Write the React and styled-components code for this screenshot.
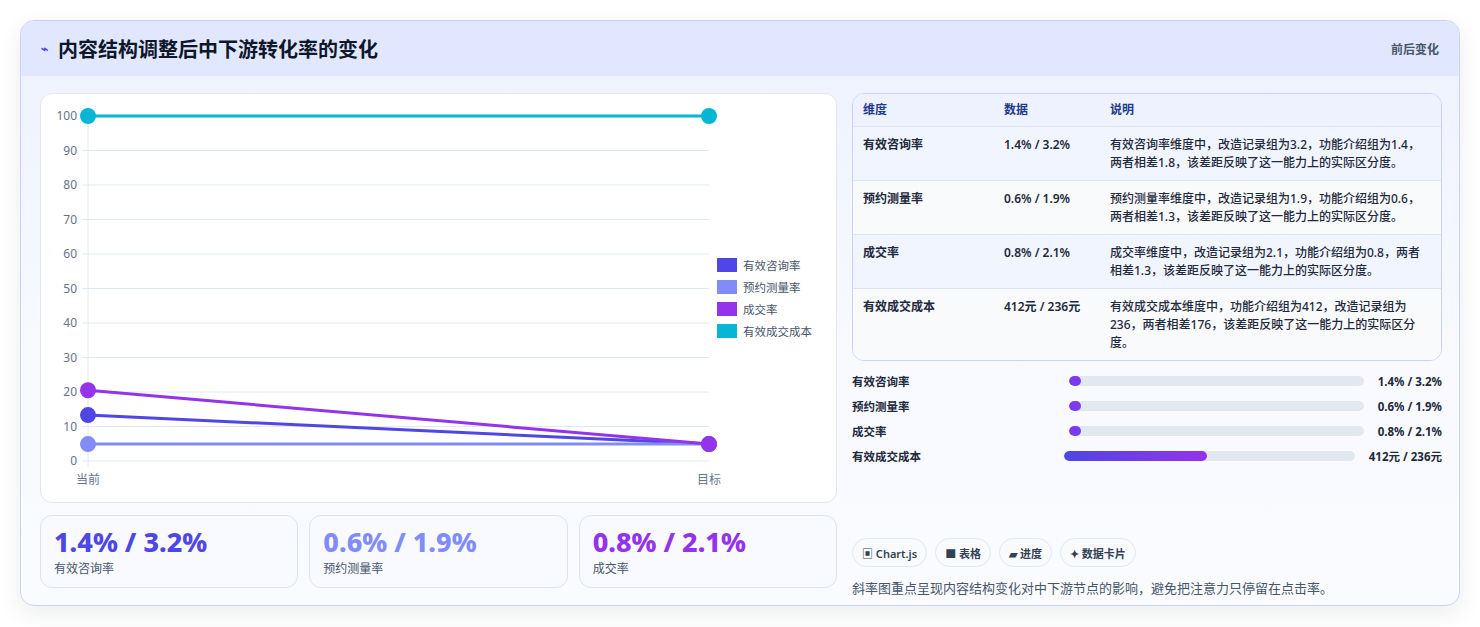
import React from "react";
import styled, { createGlobalStyle } from "styled-components";

const Global = createGlobalStyle`
  body { margin: 0; background: #fff; font-family: "Noto Sans", "Noto Sans CJK SC", sans-serif; }
`;
const Page = styled.div`padding: 20px 20px 20px 20px;`;
const Card = styled.div`
  border: 1px solid #c7d2fe; border-radius: 14px; overflow: hidden;
  background: linear-gradient(180deg, #eef2ff 0%, #f8faff 60%, #fafbff 100%);
  box-shadow: 0 8px 24px rgba(15,23,42,0.08);
  height: 586px; box-sizing: border-box;
`;
const Header = styled.div`
  height: 55px; background: #e0e7ff; display: flex; align-items: center;
  justify-content: space-between; padding: 0 20px 0 20px;
`;
const Title = styled.h1`
  margin: 0; font-size: 20px; font-weight: 700; color: #0f172a; display: flex; align-items: center; gap: 10px;
`;
const Badge = styled.span`font-size: 12px; font-weight: 700; color: #475569;`;
const Body = styled.div`
  display: grid; grid-template-columns: 797px 590px; gap: 15px; padding: 17px 19px 0 19px;
`;
const Col = styled.div`display: flex; flex-direction: column;`;
const ChartBox = styled.div`
  height: 410px; box-sizing: border-box; background: #fff; border: 1px solid #e2e8f0; border-radius: 12px; position: relative;
`;
const Stats = styled.div`display: grid; grid-template-columns: repeat(3, 1fr); gap: 11px; margin-top: 12px;`;
const Stat = styled.div`
  height: 73px; box-sizing: border-box; border: 1px solid #dbe3f3; border-radius: 12px; background: #f8faff;
  padding: 9px 13px;
`;
const StatVal = styled.div`font-size: 27px; font-weight: 800; color: ${p => p.c}; line-height: 34px;`;
const StatLbl = styled.div`font-size: 12px; color: #475569;`;
const Table = styled.div`
  border: 1px solid #c7d2fe; border-radius: 12px; overflow: hidden; background: #fff;
`;
const Row = styled.div`
  display: grid; grid-template-columns: 141px 106px 1fr; padding: ${p => p.head ? "0 10px" : "9px 10px 8px"};
  background: ${p => p.head ? "#eef2ff" : p.alt ? "#f8fafc" : "#f1f5ff"};
  border-top: ${p => p.first ? "none" : "1px solid #dbe3f0"};
  font-size: 12px; line-height: 18px; color: #1e293b; font-weight: 500;
  min-height: ${p => p.head ? "32px" : "auto"}; align-items: ${p => p.head ? "center" : "start"};
  & > span { font-weight: ${p => p.head ? 700 : 600}; color: ${p => p.head ? "#1e3a8a" : "#1e293b"}; }
  & > span:last-child { font-weight: ${p => p.head ? 700 : 500}; padding-right: 4px; }
`;
const Bars = styled.div`display: flex; flex-direction: column; gap: 7px; margin-top: 11px;`;
const BarRow = styled.div`
  display: grid; grid-template-columns: ${p => p.wide ? "212px 1fr 87px" : "217px 1fr 78px"}; align-items: center;
  font-size: 11.5px; font-weight: 600; color: #1e293b; height: 18px;
`;
const Track = styled.div`height: 10px; border-radius: 5px; background: #e2e8f0; overflow: hidden;`;
const Fill = styled.div`height: 100%; border-radius: 5px; background: linear-gradient(90deg, #4f46e5, #9333ea);`;
const BarVal = styled.span`text-align: right; font-weight: 700;`;
const Chips = styled.div`display: flex; gap: 8px; margin-top: 73px;`;
const Chip = styled.span`
  height: 29px; padding: 0 9px; border: 1px solid #e2e8f0; border-radius: 15px; background: #f8fafc;
  display: inline-flex; align-items: center; gap: 4px; font-size: 11px; font-weight: 600; color: #334155; box-sizing: border-box;
`;
const Note = styled.p`margin: 11px 0 0; font-size: 13px; color: #475569;`;
const Legend = styled.div`position: absolute; left: 676px; top: 163px; display: flex; flex-direction: column; gap: 6px;`;
const LegItem = styled.div`display: flex; align-items: center; gap: 6px; font-size: 11.5px; color: #475569;`;
const Sw = styled.span`width: 20px; height: 14px; background: ${p => p.c}; display: inline-block;`;

const series = [
  { n: "有效咨询率", c: "#4f46e5", a: 13.3, b: 4.9 },
  { n: "预约测量率", c: "#818cf8", a: 4.9, b: 4.9 },
  { n: "成交率", c: "#9333ea", a: 20.5, b: 4.9 },
  { n: "有效成交成本", c: "#06b6d4", a: 100, b: 100 },
];
const X0 = 47, X1 = 668, Y = v => 367 - v * 3.45;

function Chart() {
  return (
    <svg width="796" height="408" style={{ position: "absolute", left: 0, top: 0 }}>
      {[0,10,20,30,40,50,60,70,80,90,100].map(v => (
        <g key={v}>
          <line x1={X0 - 6} x2={X1} y1={Y(v)} y2={Y(v)} stroke="#e2e8f0" />
          <text x={36} y={Y(v) + 4} textAnchor="end" fontSize="12" fill="#64748b" fontFamily="Noto Sans">{v}</text>
        </g>
      ))}
      <line x1={X0} x2={X0} y1={Y(100)} y2={Y(0) + 6} stroke="#e2e8f0" />
      <text x={X0} y={390} textAnchor="middle" fontSize="12" fill="#64748b" fontFamily="Noto Sans CJK SC">当前</text>
      <text x={X1} y={390} textAnchor="middle" fontSize="12" fill="#64748b" fontFamily="Noto Sans CJK SC">目标</text>
      {series.map(s => (
        <g key={s.n}>
          <line x1={X0} x2={X1} y1={Y(s.a)} y2={Y(s.b)} stroke={s.c} strokeWidth="3" />
          <circle cx={X0} cy={Y(s.a)} r="8" fill={s.c} />
          <circle cx={X1} cy={Y(s.b)} r="8" fill={s.c} />
        </g>
      ))}
    </svg>
  );
}

const rows = [
  ["有效咨询率", "1.4% / 3.2%", "有效咨询率维度中，改造记录组为3.2，功能介绍组为1.4，两者相差1.8，该差距反映了这一能力上的实际区分度。"],
  ["预约测量率", "0.6% / 1.9%", "预约测量率维度中，改造记录组为1.9，功能介绍组为0.6，两者相差1.3，该差距反映了这一能力上的实际区分度。"],
  ["成交率", "0.8% / 2.1%", "成交率维度中，改造记录组为2.1，功能介绍组为0.8，两者相差1.3，该差距反映了这一能力上的实际区分度。"],
  ["有效成交成本", "412元 / 236元", "有效成交成本维度中，功能介绍组为412，改造记录组为236，两者相差176，该差距反映了这一能力上的实际区分度。"],
];
const bars = [["有效咨询率", 4, "1.4% / 3.2%"], ["预约测量率", 4, "0.6% / 1.9%"], ["成交率", 4, "0.8% / 2.1%"], ["有效成交成本", 49, "412元 / 236元", true]];

export default function App() {
  return (
    <Page>
      <Global />
      <Card>
        <Header>
          <Title><span style={{ color: "#4f46e5", fontSize: 12 }}>⌁</span>内容结构调整后中下游转化率的变化</Title>
          <Badge>前后变化</Badge>
        </Header>
        <Body>
          <Col>
            <ChartBox>
              <Chart />
              <Legend>
                {series.map(s => <LegItem key={s.n}><Sw c={s.c} />{s.n}</LegItem>)}
              </Legend>
            </ChartBox>
            <Stats>
              <Stat><StatVal c="#4f46e5">1.4% / 3.2%</StatVal><StatLbl>有效咨询率</StatLbl></Stat>
              <Stat><StatVal c="#818cf8">0.6% / 1.9%</StatVal><StatLbl>预约测量率</StatLbl></Stat>
              <Stat><StatVal c="#9333ea">0.8% / 2.1%</StatVal><StatLbl>成交率</StatLbl></Stat>
            </Stats>
          </Col>
          <Col>
            <Table>
              <Row head first><span>维度</span><span>数据</span><span>说明</span></Row>
              {rows.map((r, i) => <Row key={i} alt={i % 2 === 1}><span>{r[0]}</span><span>{r[1]}</span><span>{r[2]}</span></Row>)}
            </Table>
            <Bars>
              {bars.map(b => (
                <BarRow key={b[0]} wide={b[3]}>
                  <span>{b[0]}</span>
                  <Track><Fill style={{ width: b[1] + "%", background: b[3] ? undefined : "#7c3aed" }} /></Track>
                  <BarVal>{b[2]}</BarVal>
                </BarRow>
              ))}
            </Bars>
            <Chips>
              <Chip>▣ Chart.js</Chip><Chip>■ 表格</Chip><Chip>▰ 进度</Chip><Chip>✦ 数据卡片</Chip>
            </Chips>
            <Note>斜率图重点呈现内容结构变化对中下游节点的影响，避免把注意力只停留在点击率。</Note>
          </Col>
        </Body>
      </Card>
    </Page>
  );
}
